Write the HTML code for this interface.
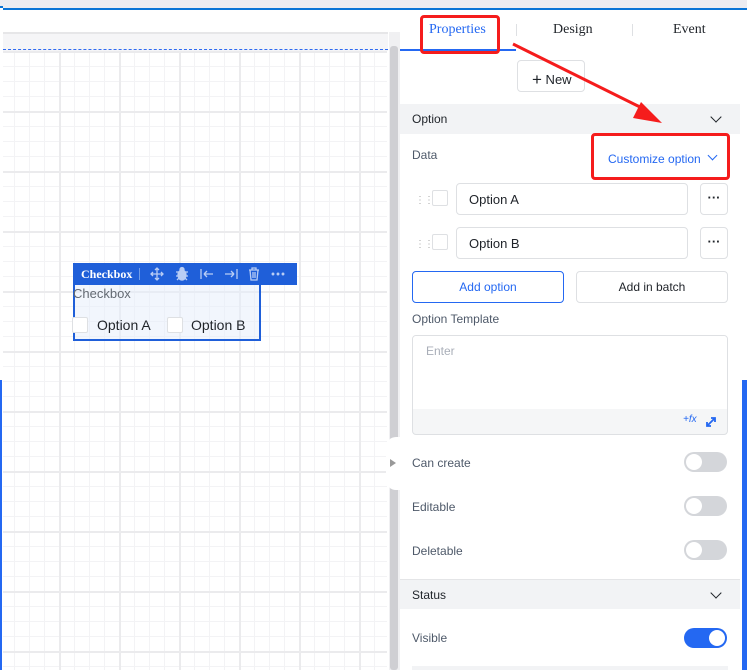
<!DOCTYPE html>
<html><head><style>
*{box-sizing:border-box;margin:0;padding:0}
body{width:747px;height:670px;overflow:hidden;position:relative;background:#fff;font-family:"Liberation Sans",sans-serif;font-size:13px;color:#1f2329}
.a{position:absolute}
.grid{left:3px;top:51px;width:384px;height:619px;background-color:#fff;
background-image:
linear-gradient(to right,#ebebed 2px,transparent 2px),
linear-gradient(to bottom,#ebebed 2px,transparent 2px),
linear-gradient(to right,#f3f3f5 1px,transparent 1px),
linear-gradient(to bottom,#f3f3f5 1px,transparent 1px);
background-size:60px 60px,60px 60px,15px 15px,15px 15px;
background-position:56px 0,0 0,11px 0,0 0}
.lbl{color:#4e5969;font-size:12px}
.inp{border:1px solid #dee0e3;border-radius:4px;background:#fff}
.tog{width:43px;height:20px;border-radius:10px;background:#d4d6da}
.tog::after{content:"";position:absolute;left:2px;top:2px;width:16px;height:16px;border-radius:50%;background:#fff}
.tog.on{background:#2468f2}
.tog.on::after{left:25px}
.sec{left:400px;width:340px;height:30px;background:#f2f3f5;font-size:12px;padding:8px 12px}
.chev{position:absolute;right:20px;top:9px;width:8px;height:8px;border-right:1.5px solid #1f2329;border-bottom:1.5px solid #1f2329;transform:rotate(45deg)}
.cb{width:16px;height:16px;border:1px solid #dee0e3;border-radius:2px;background:#fff}
.rb{border:3px solid #f51c1c;border-radius:4px}
</style></head><body>
<div class="a" style="left:0;top:0;width:747px;height:8px;background:#ececf1"></div>
<div class="a" style="left:3px;top:8px;width:744px;height:2px;background:#0a74d6"></div>
<div class="a" style="left:0;top:6px;width:3px;height:2px;background:#0a74d6"></div>
<div class="a" style="left:3px;top:32px;width:385px;height:19px;background:#f5f5f7;border-top:2px solid #e6e6e8"></div>
<div class="a grid"></div>
<div class="a" style="left:3px;top:49px;width:385px;border-top:1px dashed #2f6bf0"></div>
<div class="a" style="left:389px;top:32px;width:11px;height:638px;background:#f0f0f2"></div>
<div class="a" style="left:390px;top:46px;width:8px;height:624px;background:#cfcfd3;border-radius:3px"></div>
<div class="a" style="left:0;top:380px;width:2px;height:290px;background:#2468f2"></div>

<!-- widget -->
<div class="a" style="left:73px;top:263px;width:224px;height:22px;background:#1f5fd9;color:#fff;font-family:'Liberation Serif',serif;font-weight:bold;font-size:12px;padding:4px 8px">Checkbox</div>
<div class="a" style="left:139px;top:268px;width:1px;height:12px;background:#6f9be8"></div>
<svg class="a" style="left:150px;top:266px" width="140" height="16" viewBox="0 0 140 16" fill="none" stroke="#b9cdf5" stroke-width="1.3">
<path d="M7 2v12M1 8h12M5 4l2-2 2 2M5 12l2 2 2-2M3 6l-2 2 2 2M11 6l2 2-2 2"/>
<ellipse cx="32" cy="9" rx="4" ry="5" fill="#b9cdf5"/><circle cx="32" cy="3.5" r="2" fill="#b9cdf5"/><path d="M26 6h12M26 10h12M27 14l2-2M37 14l-2-2"/>
<path d="M51 3v10M54 8h9M54 8l3-3M54 8l3 3"/>
<path d="M87 3v10M75 8h9M84 8l-3-3M84 8l-3 3"/>
<path d="M99 4h10M102 4V2h4v2M100 4l1 10h6l1-10M103 6v6M105 6v6"/>
<circle cx="123" cy="8" r=".8" fill="#b9cdf5"/><circle cx="128" cy="8" r=".8" fill="#b9cdf5"/><circle cx="133" cy="8" r=".8" fill="#b9cdf5"/>
</svg>
<div class="a" style="left:73px;top:285px;width:188px;height:56px;border:2px solid #1f5fd9;border-top:none;background:rgba(230,237,252,.5)"></div>
<div class="a" style="left:73px;top:286px;color:#646a73;font-size:13px">Checkbox</div>
<div class="a cb" style="left:72px;top:317px"></div>
<div class="a" style="left:97px;top:317px;font-size:14px">Option A</div>
<div class="a cb" style="left:167px;top:317px"></div>
<div class="a" style="left:191px;top:317px;font-size:14px">Option B</div>

<!-- panel -->
<div class="a" style="left:742px;top:380px;width:5px;height:290px;background:#2468f2"></div>
<div class="a" style="left:429px;top:22px;color:#2468f2;font-family:'Liberation Serif',serif;font-size:14px">Properties</div>
<div class="a" style="left:553px;top:22px;font-family:'Liberation Serif',serif;font-size:14px">Design</div>
<div class="a" style="left:673px;top:22px;font-family:'Liberation Serif',serif;font-size:14px">Event</div>
<div class="a" style="left:516px;top:24px;width:1px;height:12px;background:#dee0e3"></div>
<div class="a" style="left:632px;top:24px;width:1px;height:12px;background:#dee0e3"></div>
<div class="a" style="left:400px;top:49px;width:116px;height:2px;background:#2468f2"></div>
<div class="a inp" style="left:517px;top:60px;width:68px;height:32px;font-size:13px;padding:8px 0 0 14px"><span style="font-size:17px;position:relative;top:1px">+</span> New</div>

<div class="a sec" style="top:104px">Option<div class="chev"></div></div>
<div class="a lbl" style="left:412px;top:148px">Data</div>
<div class="a" style="left:608px;top:152px;color:#2468f2;font-size:12px">Customize option</div>
<div class="a" style="left:709px;top:152px;width:7px;height:7px;border-right:1.3px solid #2468f2;border-bottom:1.3px solid #2468f2;transform:rotate(45deg)"></div>

<div class="a" style="left:415px;top:195px;color:#aaa;font-size:10px;letter-spacing:-1px">⋮⋮</div>
<div class="a cb" style="left:432px;top:190px"></div>
<div class="a inp" style="left:456px;top:183px;width:232px;height:32px;padding:8px 12px">Option A</div>
<div class="a inp" style="left:700px;top:183px;width:28px;height:32px;text-align:center;font-weight:bold;padding-top:6px">···</div>
<div class="a" style="left:415px;top:239px;color:#aaa;font-size:10px;letter-spacing:-1px">⋮⋮</div>
<div class="a cb" style="left:432px;top:234px"></div>
<div class="a inp" style="left:456px;top:227px;width:232px;height:32px;padding:8px 12px">Option B</div>
<div class="a inp" style="left:700px;top:227px;width:28px;height:32px;text-align:center;font-weight:bold;padding-top:6px">···</div>

<div class="a" style="left:412px;top:271px;width:152px;height:32px;border:1px solid #2468f2;border-radius:4px;color:#2468f2;text-align:center;padding-top:8px;font-size:12px">Add option</div>
<div class="a inp" style="left:576px;top:271px;width:152px;height:32px;text-align:center;padding-top:8px;font-size:12px">Add in batch</div>
<div class="a lbl" style="left:412px;top:312px">Option Template</div>
<div class="a" style="left:412px;top:335px;width:316px;height:100px;border:1px solid #dee0e3;border-radius:4px;background:#f5f6f7;overflow:hidden">
<div style="height:73px;background:#fff;padding:8px 13px;color:#a9aeb8;font-size:12px">Enter</div>
<div style="position:absolute;left:270px;top:78px;color:#2468f2;font-size:10px;font-style:italic">+fx</div>
<svg style="position:absolute;left:292px;top:80px" width="12" height="12" viewBox="0 0 12 12" stroke="#2468f2" stroke-width="1.8" fill="none"><path d="M2 10L10 2M6 2h4v4M2 6v4h4"/></svg>
</div>

<div class="a" style="left:386px;top:437px;width:20px;height:53px;background:#fff;border-radius:10px 0 0 10px"></div>
<div class="a" style="left:390px;top:459px;width:0;height:0;border-left:6px solid #999;border-top:4px solid transparent;border-bottom:4px solid transparent"></div>

<div class="a lbl" style="left:412px;top:456px">Can create</div>
<div class="a tog" style="left:684px;top:452px"></div>
<div class="a lbl" style="left:412px;top:500px">Editable</div>
<div class="a tog" style="left:684px;top:496px"></div>
<div class="a lbl" style="left:412px;top:544px">Deletable</div>
<div class="a tog" style="left:684px;top:540px"></div>

<div class="a sec" style="top:579px;border-top:1px solid #e4e5e7">Status<div class="chev"></div></div>
<div class="a lbl" style="left:412px;top:631px">Visible</div>
<div class="a tog on" style="left:684px;top:628px"></div>
<div class="a" style="left:412px;top:666px;width:316px;height:4px;background:#f2f3f5"></div>

<!-- annotations -->
<div class="a rb" style="left:420px;top:15px;width:80px;height:39px"></div>
<div class="a rb" style="left:591px;top:133px;width:139px;height:47px"></div>
<svg class="a" style="left:500px;top:35px" width="180" height="100" viewBox="0 0 180 100">
<path d="M13 9L140 72" stroke="#f51c1c" stroke-width="3"/>
<path d="M162 88L133 83L141 67Z" fill="#f51c1c"/>
</svg>
</body></html>
